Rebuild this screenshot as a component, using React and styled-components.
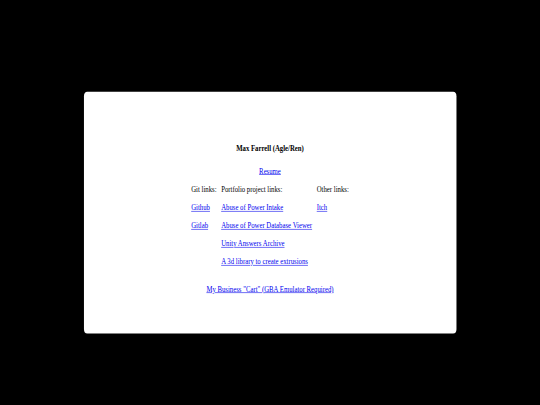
import React from "react";
import styled, { createGlobalStyle } from "styled-components";

const Global = createGlobalStyle`
  html, body {
    margin: 0;
    padding: 0;
    background: #000;
    overflow: hidden;
  }
`;

const Frame = styled.div`
  width: 540px;
  height: 405px;
  overflow: hidden;
  background: #000;
`;

const Viewport = styled.div`
  width: 1280px;
  height: 720px;
  transform: scale(0.421875, 0.5625);
  transform-origin: 0 0;
  background: #000;
  padding-top: 163px;
  box-sizing: border-box;
  font-family: "Liberation Serif", "Times New Roman", serif;
  font-size: 16px;
  line-height: 18px;
  color: #000;
`;

const Card = styled.main`
  width: 883px;
  margin: 0 auto;
  background: #fff;
  border-radius: 8px;
  padding: 91px 0 70px;
  box-sizing: border-box;
  display: flex;
  flex-direction: column;
  align-items: center;
`;

const Title = styled.h1`
  margin: 0;
  font-size: 16px;
  font-weight: bold;
  line-height: 18px;
`;

const Link = styled.a`
  color: #0000ee;
  text-decoration: underline;
`;

const Line = styled.p`
  margin: ${(p) => p.$top}px 0 0;
  line-height: 18px;
`;

const Table = styled.table`
  margin-top: 8px;
  border-collapse: separate;
  border-spacing: 0;
`;

const Cell = styled.td`
  padding: 7px 5.5px;
  line-height: 18px;
  text-align: left;
  vertical-align: top;
  white-space: nowrap;
`;

const rows = [
  [["Git links:"], ["Portfolio project links:"], ["Other links:"]],
  [["Github", true], ["Abuse of Power Intake", true], ["Itch", true]],
  [["Gitlab", true], ["Abuse of Power Database Viewer", true], null],
  [null, ["Unity Answers Archive", true], null],
  [null, ["A 3d library to create extrusions", true], null],
];

export default function App() {
  return (
    <>
      <Global />
      <Frame>
        <Viewport>
          <Card>
            <Title>Max Farrell (Agle/Ren)</Title>
            <Line $top={23}>
              <Link href="#">Resume</Link>
            </Line>
            <Table>
              <tbody>
                {rows.map((r, i) => (
                  <tr key={i}>
                    {r.map((c, j) => (
                      <Cell key={j}>
                        {c ? c[1] ? <Link href="#">{c[0]}</Link> : c[0] : null}
                      </Cell>
                    ))}
                  </tr>
                ))}
              </tbody>
            </Table>
            <Line $top={24}>
              <Link href="#">My Business "Cart" (GBA Emulator Required)</Link>
            </Line>
          </Card>
        </Viewport>
      </Frame>
    </>
  );
}
